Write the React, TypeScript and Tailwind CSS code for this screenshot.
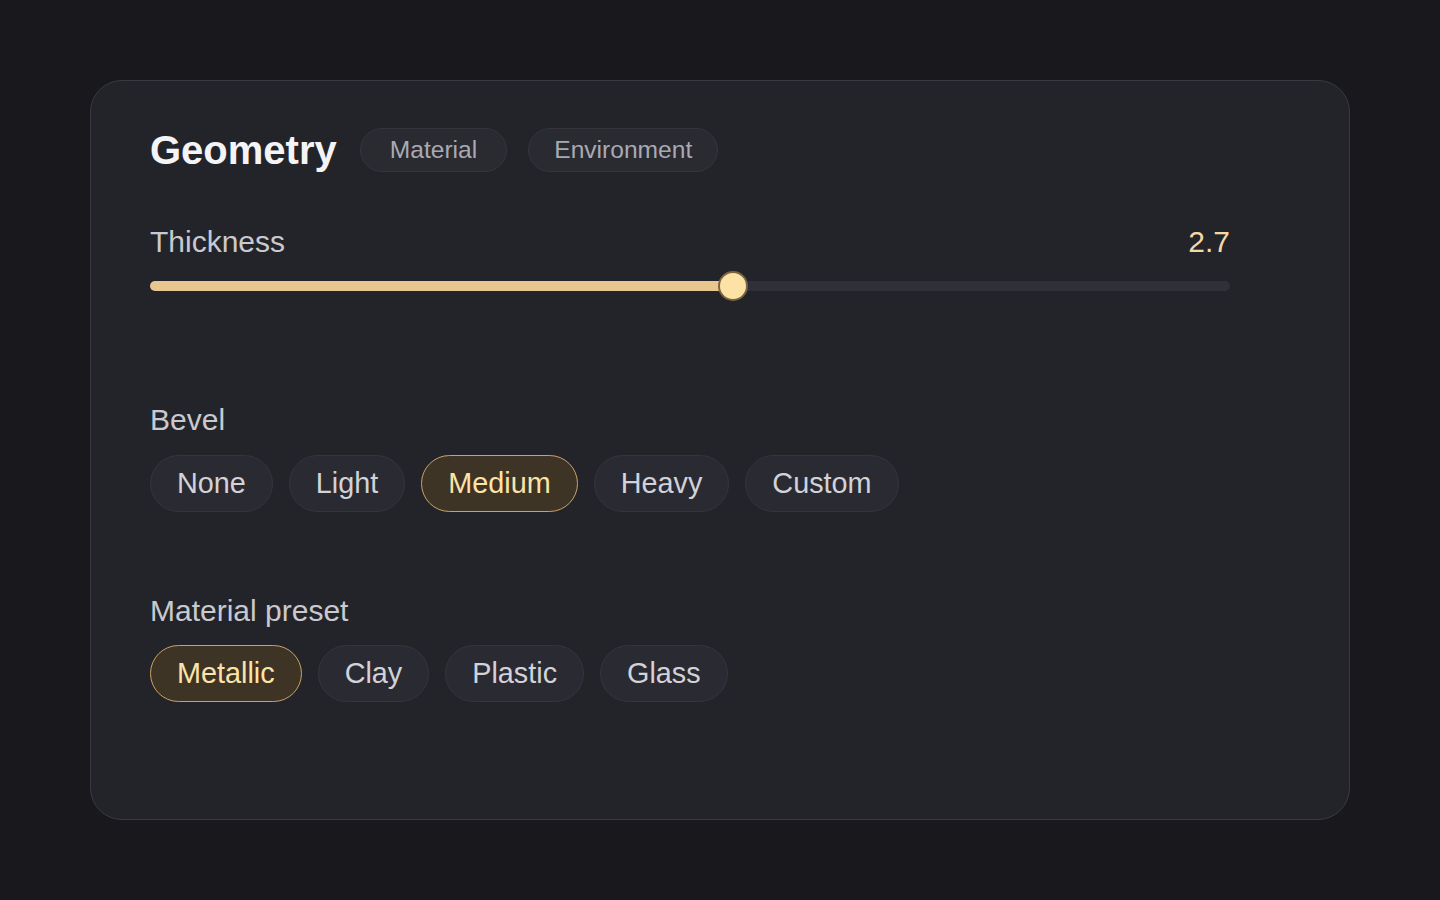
import { useState } from "react";

const bevels = ["None", "Light", "Medium", "Heavy", "Custom"];
const presets = ["Metallic", "Clay", "Plastic", "Glass"];

function Chip({ label, active, onClick }: { label: string; active: boolean; onClick: () => void }) {
  return (
    <button
      onClick={onClick}
      className={
        active
          ? "h-[57px] px-[26px] rounded-full border-[1.5px] border-[#c9a266] bg-[#3e3426] text-[#fde3a8] text-[28.8px] leading-none"
          : "h-[57px] px-[26px] rounded-full border border-[#34353d] bg-[#2a2b32] text-[#d2d2d8] text-[28.8px] leading-none"
      }
    >
      {label}
    </button>
  );
}

export default function App() {
  const [bevel, setBevel] = useState("Medium");
  const [preset, setPreset] = useState("Metallic");
  const [thickness] = useState(2.7);
  const pct = 54;

  return (
    <div
      className="min-h-[900px] w-full bg-[#18181d] pt-[80px] px-[90px]"
      style={{ fontFamily: '"Liberation Sans", Arial, sans-serif' }}
    >
      <div className="h-[740px] rounded-[32px] border border-[#3a3b42] bg-[#23242a] pl-[59px] pr-[119px] pt-[47px]">
        {/* header */}
        <div className="flex items-center h-[44px]">
          <h1 className="text-[40px] font-bold text-[#f4f4f6] mr-[23px]">Geometry</h1>
          <div className="flex gap-[21px]">
            <button className="h-[44px] px-[29px] rounded-full border border-[#35363d] bg-[#2a2b31] text-[24.6px] text-[#a9a9b3]">
              Material
            </button>
            <button className="h-[44px] px-[25px] rounded-full border border-[#35363d] bg-[#2a2b31] text-[24.6px] text-[#a9a9b3]">
              Environment
            </button>
          </div>
        </div>

        {/* thickness */}
        <div className="mt-[51px] flex items-center justify-between h-[36px]">
          <span className="text-[30px] text-[#c9c9cf]">Thickness</span>
          <span className="text-[30px] text-[#f3d9a4]">{thickness.toFixed(1)}</span>
        </div>
        <div className="relative mt-[12px] h-[30px] flex items-center">
          <div className="h-[10px] w-full rounded-full bg-[#2f3038]">
            <div className="h-full rounded-full bg-[#e9c58f]" style={{ width: `${pct}%` }} />
          </div>
          <div
            className="absolute top-0 h-[30px] w-[30px] -ml-[15px] rounded-full bg-[#fde2a6] border-2 border-[#7a6440]"
            style={{ left: `${pct}%` }}
          />
        </div>

        {/* bevel */}
        <div className="mt-[101px] text-[30px] leading-[36px] text-[#c9c9cf]">Bevel</div>
        <div className="mt-[17px] flex gap-[16px]">
          {bevels.map((b) => (
            <Chip key={b} label={b} active={bevel === b} onClick={() => setBevel(b)} />
          ))}
        </div>

        {/* material preset */}
        <div className="mt-[81px] text-[30px] leading-[36px] text-[#c9c9cf]">Material preset</div>
        <div className="mt-[16px] flex gap-[16px]">
          {presets.map((p) => (
            <Chip key={p} label={p} active={preset === p} onClick={() => setPreset(p)} />
          ))}
        </div>
      </div>
    </div>
  );
}
